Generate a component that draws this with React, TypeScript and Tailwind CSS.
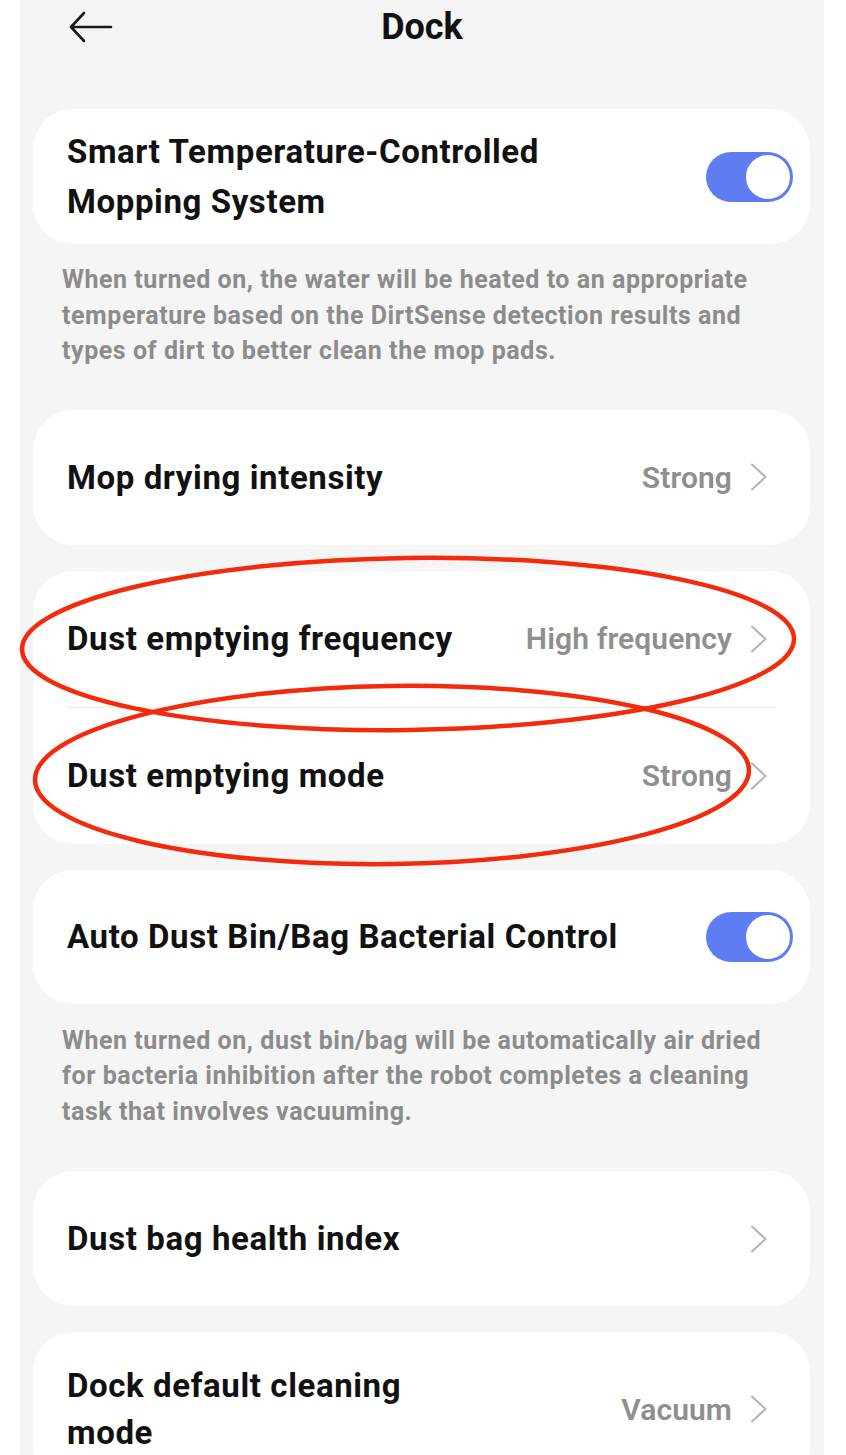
import React from "react";

const font = { fontFamily: "Roboto, 'Noto Sans', 'Liberation Sans', sans-serif" };

function Chevron() {
  return (
    <svg width="18" height="28" viewBox="0 0 18 28" className="shrink-0">
      <path d="M2 1.5 L15.5 14 L2 26.5" fill="none" stroke="#b3b3b3" strokeWidth="2" strokeLinecap="round" strokeLinejoin="round" />
    </svg>
  );
}

function Toggle() {
  return (
    <div className="w-[87px] h-[50px] rounded-full bg-[#5f7cf2] flex items-center justify-end pr-[3px] shrink-0">
      <div className="w-[44px] h-[44px] rounded-full bg-white" />
    </div>
  );
}

const titleCls = "text-[33px] font-bold text-[#111111] tracking-[0.6px]";
const valueCls = "text-[30px] font-semibold text-[#8f8f8f] tracking-[0.1px]";
const descCls = "text-[25px] leading-[35.5px] font-bold text-[#8c8c8c] tracking-[0.55px]";

function NavRow({ title, value }: { title: string; value?: string }) {
  return (
    <div className="h-[136px] flex items-center pl-[34px] pr-[42px]">
      <div className={`${titleCls} flex-1 leading-[47px]`}>{title}</div>
      <div className="flex items-center gap-[18px]">
        {value && <span className={valueCls}>{value}</span>}
        <Chevron />
      </div>
    </div>
  );
}

export default function App() {
  return (
    <div className="relative bg-white min-h-screen pl-[20px] pr-[22px] overflow-hidden" style={font}>
      <div className="bg-[#f5f5f5] min-h-[1455px]">
        {/* Header */}
        <div className="h-[54px] grid grid-cols-[1fr_auto_1fr] items-center">
          <div className="pl-[49px] flex items-center">
            <svg width="44" height="32" viewBox="0 0 44 32">
              <path d="M42 16 H2 M15 2 L2 16 L15 30" fill="none" stroke="#1a1a1a" strokeWidth="2.6" strokeLinecap="round" strokeLinejoin="round" />
            </svg>
          </div>
          <div className="text-[36px] font-bold text-[#111111] leading-none">Dock</div>
          <div />
        </div>

        <div className="pl-[13px] pr-[14px] pt-[55px]">
          {/* Card 1 */}
          <div className="bg-white rounded-[40px] h-[135px] flex items-center justify-between pl-[34px] pr-[17px]">
            <div className={`${titleCls} leading-[50px] max-w-[560px]`}>
              Smart Temperature-Controlled Mopping System
            </div>
            <Toggle />
          </div>
          <p className={`pl-[29px] pr-[29px] pt-[18px] pb-[41px] ${descCls}`}>
            When turned on, the water will be heated to an appropriate temperature based on the DirtSense detection results and types of dirt to better clean the mop pads.
          </p>

          {/* Card 2 */}
          <div className="bg-white rounded-[40px] h-[135px] flex items-center">
            <div className="w-full"><NavRow title="Mop drying intensity" value="Strong" /></div>
          </div>

          {/* Card 3 */}
          <div className="bg-white rounded-[40px] mt-[26px]">
            <NavRow title="Dust emptying frequency" value="High frequency" />
            <div className="ml-[34px] mr-[34px] h-[1px] bg-[#ebebeb]" />
            <NavRow title="Dust emptying mode" value="Strong" />
          </div>

          {/* Card 4 */}
          <div className="bg-white rounded-[40px] h-[134px] mt-[26px] flex items-center justify-between pl-[34px] pr-[17px]">
            <div className={titleCls}>Auto Dust Bin/Bag Bacterial Control</div>
            <Toggle />
          </div>
          <p className={`pl-[29px] pr-[29px] pt-[19px] pb-[42px] ${descCls}`}>
            When turned on, dust bin/bag will be automatically air dried for bacteria inhibition after the robot completes a cleaning task that involves vacuuming.
          </p>

          {/* Card 5 */}
          <div className="bg-white rounded-[40px] h-[135px] flex items-center">
            <div className="w-full"><NavRow title="Dust bag health index" /></div>
          </div>

          {/* Card 6 */}
          <div className="bg-white rounded-[40px] mt-[26px] h-[154px] flex items-center pl-[34px] pr-[42px]">
            <div className={`${titleCls} leading-[47px] max-w-[400px] flex-1`}>
              Dock default cleaning mode
            </div>
            <div className="flex items-center gap-[18px] ml-auto">
              <span className={valueCls}>Vacuum</span>
              <Chevron />
            </div>
          </div>
        </div>
      </div>

      {/* Red annotation ellipses */}
      <svg className="absolute top-0 left-0 pointer-events-none" width="846" height="1455" viewBox="0 0 846 1455">
        <ellipse cx="408" cy="644" rx="386" ry="86" fill="none" stroke="#f42a0c" strokeWidth="4.5" transform="rotate(-0.8 408 644)" />
        <ellipse cx="392" cy="775" rx="357" ry="89" fill="none" stroke="#f42a0c" strokeWidth="4.5" transform="rotate(-0.8 392 775)" />
      </svg>
    </div>
  );
}
